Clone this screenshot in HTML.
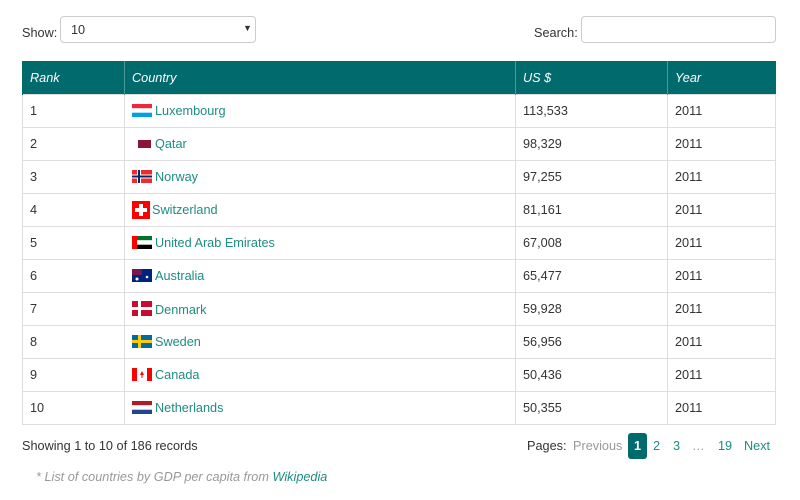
<!DOCTYPE html><html><head><style>
body{margin:0;width:800px;height:500px;background:#fff;font-family:"Liberation Sans",sans-serif;font-size:12.7px;color:#333;position:relative;overflow:hidden}
.a{position:absolute}
a{color:#1e8c80;text-decoration:none}
table{position:absolute;left:22px;top:61px;width:754px;border-collapse:collapse}
th{background:#006a6c;color:#fff;font-style:italic;font-weight:normal;text-align:left;height:33px;padding:0 7px;border-left:1px solid #4d999a}
th:first-child{border-left:1px solid #006a6c}
td{height:31.9px;box-sizing:border-box;border:1px solid #ddd;padding:0 7px}
tr{height:33px}
svg{vertical-align:-2px;margin-right:3px}
</style></head><body>
<div class="a" style="left:22px;top:26px">Show:</div>
<div class="a" style="left:60px;top:16px;width:194px;height:25px;border:1px solid #ccc;border-radius:4px"><span class="a" style="left:10px;top:6px">10</span><span class="a" style="left:182px;top:6px;font-size:9px">▼</span></div>
<div class="a" style="left:534px;top:26px">Search:</div>
<div class="a" style="left:581px;top:16px;width:193px;height:25px;border:1px solid #ccc;border-radius:4px"></div>
<table>
<tr><th style="width:87px">Rank</th><th style="width:376px">Country</th><th style="width:137px">US $</th><th>Year</th></tr>
<tr><td>1</td><td><svg width="20" height="13"><rect width="20" height="4.3" fill="#ed2939"/><rect y="4.3" width="20" height="4.4" fill="#fff"/><rect y="8.7" width="20" height="4.3" fill="#00a1de"/></svg><a>Luxembourg</a></td><td>113,533</td><td>2011</td></tr>
<tr><td>2</td><td><svg width="20" height="13"><rect x="6" y="3" width="13" height="8" fill="#8a1538"/></svg><a>Qatar</a></td><td>98,329</td><td>2011</td></tr>
<tr><td>3</td><td><svg width="20" height="13"><rect width="20" height="13" fill="#ef2b2d"/><rect x="5" width="4" height="13" fill="#fff"/><rect y="4.5" width="20" height="4" fill="#fff"/><rect x="6" width="2" height="13" fill="#002868"/><rect y="5.5" width="20" height="2" fill="#002868"/></svg><a>Norway</a></td><td>97,255</td><td>2011</td></tr>
<tr><td>4</td><td><svg width="18" height="18" style="vertical-align:-5px;margin-right:2px"><rect width="18" height="18" fill="#f00"/><rect x="7" y="3" width="4" height="12" fill="#fff"/><rect x="3" y="7" width="12" height="4" fill="#fff"/></svg><a>Switzerland</a></td><td>81,161</td><td>2011</td></tr>
<tr><td>5</td><td><svg width="20" height="13"><rect width="20" height="4.3" fill="#00732f"/><rect y="4.3" width="20" height="4.4" fill="#fff"/><rect y="8.7" width="20" height="4.3" fill="#000"/><rect width="5" height="13" fill="#f00"/></svg><a>United Arab Emirates</a></td><td>67,008</td><td>2011</td></tr>
<tr><td>6</td><td><svg width="20" height="13"><rect width="20" height="13" fill="#00247d"/><rect width="10" height="6" fill="#c8102e" opacity=".6"/><circle cx="15" cy="8" r="1.3" fill="#fff"/><circle cx="5" cy="10" r="1.5" fill="#fff"/></svg><a>Australia</a></td><td>65,477</td><td>2011</td></tr>
<tr><td>7</td><td><svg width="20" height="15"><rect width="20" height="15" fill="#c60c30"/><rect x="6" width="3" height="15" fill="#fff"/><rect y="6" width="20" height="3" fill="#fff"/></svg><a>Denmark</a></td><td>59,928</td><td>2011</td></tr>
<tr><td>8</td><td><svg width="20" height="13"><rect width="20" height="13" fill="#006aa7"/><rect x="6" width="3" height="13" fill="#fecc00"/><rect y="5" width="20" height="3" fill="#fecc00"/></svg><a>Sweden</a></td><td>56,956</td><td>2011</td></tr>
<tr><td>9</td><td><svg width="20" height="13"><rect width="20" height="13" fill="#fff"/><rect width="5" height="13" fill="#f00"/><rect x="15" width="5" height="13" fill="#f00"/><path d="M10 3l2 4h-1.5v3h-1v-3H8z" fill="#f00"/></svg><a>Canada</a></td><td>50,436</td><td>2011</td></tr>
<tr><td>10</td><td><svg width="20" height="13"><rect width="20" height="4.3" fill="#ae1c28"/><rect y="4.3" width="20" height="4.4" fill="#fff"/><rect y="8.7" width="20" height="4.3" fill="#21468b"/></svg><a>Netherlands</a></td><td>50,355</td><td>2011</td></tr>
</table>
<div class="a" style="left:22px;top:439px">Showing 1 to 10 of 186 records</div>
<div class="a" style="left:527px;top:439px">Pages:</div>
<div class="a" style="left:573px;top:439px;color:#999">Previous</div>
<div class="a" style="left:628px;top:433px;width:19px;height:26px;background:#006a6c;border-radius:3px;color:#fff;font-weight:bold;text-align:center;line-height:26px">1</div>
<a class="a" style="left:653px;top:439px">2</a>
<a class="a" style="left:673px;top:439px">3</a>
<div class="a" style="left:692px;top:439px;color:#999">…</div>
<a class="a" style="left:718px;top:439px">19</a>
<a class="a" style="left:744px;top:439px">Next</a>
<div class="a" style="left:36px;top:470px;font-style:italic;color:#999">* List of countries by GDP per capita from <a>Wikipedia</a></div>
</body></html>
